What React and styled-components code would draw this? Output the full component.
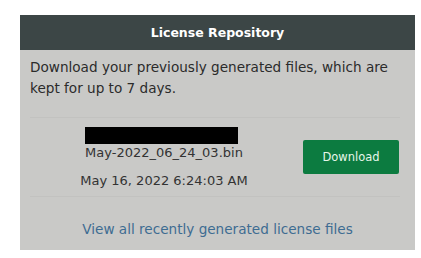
import React from "react";
import styled, { createGlobalStyle } from "styled-components";

const Global = createGlobalStyle`
  html, body { margin: 0; padding: 0; background: #ffffff; }
  body { font-family: "DejaVu Sans", "Liberation Sans", sans-serif; }
`;

const Page = styled.div`
  padding: 15px 6px 0 20px;
`;

const Panel = styled.section`
  width: 395px;
  background: #c9c9c7;
  display: flex;
  flex-direction: column;
`;

const Header = styled.header`
  height: 35px;
  background: #3c4646;
  color: #ffffff;
  display: flex;
  align-items: center;
  justify-content: center;
  font-weight: bold;
  font-size: 12.5px;
`;

const Body = styled.div`
  padding: 7px 15px 0 10px;
  display: flex;
  flex-direction: column;
`;

const Intro = styled.p`
  margin: 0;
  font-size: 13.6px;
  line-height: 21px;
  color: #2b2b2b;
`;

const Row = styled.div`
  margin-top: 18px;
  height: 78px;
  border-top: 1px solid #c2c2c0;
  border-bottom: 1px solid #c2c2c0;
  display: grid;
  grid-template-columns: 268px 1fr;
  align-items: center;
`;

const FileCell = styled.div`
  display: flex;
  flex-direction: column;
  align-items: center;
  color: #333;
  padding-top: 2px;
`;

const Redacted = styled.div`
  width: 153px;
  height: 17px;
  background: #000;
  margin-left: -6px;
`;

const FileName = styled.div`
  font-size: 13px;
  line-height: 18px;
`;

const Stamp = styled.div`
  font-size: 13px;
  line-height: 18px;
  margin-top: 10px;
`;

const ActionCell = styled.div`
  display: flex;
  justify-content: flex-end;
  padding-right: 1px;
`;

const Button = styled.button`
  width: 96px;
  height: 34px;
  border: none;
  border-radius: 2px;
  background: #0c7b40;
  color: #e6f6ea;
  font-family: "DejaVu Sans", "Liberation Sans", sans-serif;
  font-size: 11.5px;
  cursor: pointer;
`;

const Footer = styled.div`
  padding: 22px 0 11px;
  display: flex;
  justify-content: center;
`;

const Link = styled.a`
  color: #3e6c92;
  font-size: 13.6px;
  line-height: 20px;
  text-decoration: none;
`;

export default function App() {
  return (
    <>
      <Global />
      <Page>
        <Panel>
          <Header>License Repository</Header>
          <Body>
            <Intro>
              Download your previously generated files, which are kept for up to 7 days.
            </Intro>
            <Row>
              <FileCell>
                <Redacted />
                <FileName>May-2022_06_24_03.bin</FileName>
                <Stamp>May 16, 2022 6:24:03 AM</Stamp>
              </FileCell>
              <ActionCell>
                <Button>Download</Button>
              </ActionCell>
            </Row>
          </Body>
          <Footer>
            <Link href="#">View all recently generated license files</Link>
          </Footer>
        </Panel>
      </Page>
    </>
  );
}
